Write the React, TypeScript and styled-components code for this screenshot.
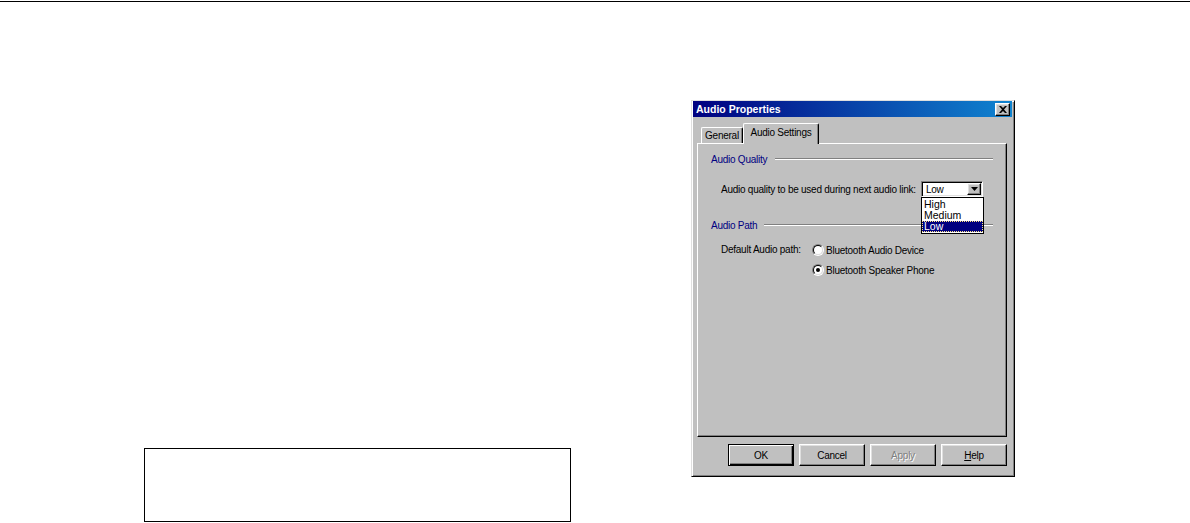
import styled, { createGlobalStyle } from 'styled-components'

const face = '#c0c0c0'
const shadow = '#808080'
const light = '#dfdfdf'
const navy = '#000080'
const uiFont = `'Liberation Sans', Arial, sans-serif`

const GlobalStyle = createGlobalStyle`
  html, body {
    margin: 0;
    padding: 0;
    background: #fff;
  }
  body {
    font-family: ${uiFont};
  }
`

const Page = styled.div`
  width: 1190px;
  height: 523px;
  overflow: hidden;
`

const TopRule = styled.div`
  height: 1px;
  margin-top: 1px;
  background: #000;
`

const Stage = styled.div`
  display: flex;
  align-items: flex-start;
`

const LeftColumn = styled.div`
  padding-left: 144px;
  padding-top: 446px;
`

const NoteBox = styled.div`
  width: 425px;
  height: 72px;
  border: 1px solid #000;
`

const DialogColumn = styled.div`
  margin-left: 120px;
  margin-top: 98px;
`

const Dialog = styled.div`
  box-sizing: border-box;
  width: 324px;
  height: 377px;
  padding: 0 2px 2px 2px;
  background: ${face};
  border: 1px solid;
  border-color: ${light} #000 #000 ${light};
  box-shadow: inset 1px 1px #fff, inset -1px -1px ${shadow};
  display: flex;
  flex-direction: column;
  font-size: 10px;
  letter-spacing: -0.25px;
  color: #000;
`

const TitleBar = styled.div`
  height: 16px;
  margin-left: -1px;
  padding: 0 2px 0 3px;
  display: flex;
  align-items: center;
  justify-content: space-between;
  background: linear-gradient(to right, #000080, #1084d0);
  color: #fff;
  font-weight: bold;
  font-size: 10.5px;
  letter-spacing: 0;
`

const Raised = styled.div`
  box-sizing: border-box;
  background: ${face};
  border: 1px solid;
  border-color: #fff #000 #000 #fff;
  box-shadow: inset -1px -1px ${shadow}, inset 1px 1px ${light};
  display: flex;
  align-items: center;
  justify-content: center;
`

const CloseButton = styled(Raised)`
  width: 15px;
  height: 13px;
`

const Body = styled.div`
  flex: 1;
  display: flex;
  flex-direction: column;
  padding: 6px 5px 0 3px;
`

const TabRow = styled.div`
  height: 20px;
  padding-left: 4px;
  display: flex;
  align-items: flex-end;
  position: relative;
  z-index: 1;
`

const Tab = styled.div<{ active?: boolean }>`
  box-sizing: border-box;
  height: ${(p) => (p.active ? '21px' : '16px')};
  width: ${(p) => (p.active ? '76px' : '42px')};
  margin-bottom: ${(p) => (p.active ? '-1px' : '0')};
  padding-top: ${(p) => (p.active ? '3px' : '2px')};
  background: ${face};
  border-top: 1px solid #fff;
  border-left: 1px solid #fff;
  border-right: 1px solid #000;
  border-radius: 2px 2px 0 0;
  box-shadow: inset -1px 0 ${shadow};
  text-align: center;
`

const Panel = styled.div`
  box-sizing: border-box;
  height: 294px;
  border: 1px solid;
  border-color: #fff #000 #000 #fff;
  box-shadow: inset -1px -1px ${shadow};
  padding: 9px 13px 0 13px;
  display: flex;
  flex-direction: column;
`

const GroupHeader = styled.div<{ gap: number }>`
  display: flex;
  align-items: center;
  gap: ${(p) => p.gap}px;
  height: 12px;
`

const GroupLabel = styled.span`
  color: ${navy};
`

const GroupLine = styled.div`
  flex: 1;
  border-top: 1px solid ${shadow};
  border-bottom: 1px solid #fff;
`

const QualityRow = styled.div`
  margin-top: 16px;
  padding: 0 10px 0 10px;
  display: flex;
  align-items: center;
  justify-content: space-between;
`

const Combo = styled.div`
  position: relative;
  box-sizing: border-box;
  width: 62px;
  height: 16px;
  background: #fff;
  border: 1px solid;
  border-color: ${shadow} #fff #fff ${shadow};
  box-shadow: inset 1px 1px #000, inset -1px -1px ${light};
  display: flex;
  align-items: center;
  justify-content: space-between;
  padding: 2px 2px 2px 4px;
`

const ComboArrow = styled(Raised)`
  width: 14px;
  height: 12px;
  margin-right: -1px;
`

const DropList = styled.div`
  position: absolute;
  top: 15px;
  left: -1px;
  width: 63px;
  box-sizing: border-box;
  background: #fff;
  border: 1px solid #000;
  padding: 1px 0;
  z-index: 2;
`

const DropItem = styled.div<{ selected?: boolean }>`
  height: 11px;
  line-height: 11px;
  padding-left: 2px;
  font-size: 10.5px;
  letter-spacing: 0;
  background: ${(p) => (p.selected ? navy : 'transparent')};
  color: ${(p) => (p.selected ? '#fff' : '#000')};
  outline: ${(p) => (p.selected ? '1px dotted #ffe680' : 'none')};
  outline-offset: -1px;
`

const PathHeader = styled(GroupHeader)`
  margin-top: 22px;
`

const PathGrid = styled.div`
  margin-top: 13px;
  padding-left: 10px;
  display: grid;
  grid-template-columns: 91px auto;
  align-items: start;
`

const PathLabel = styled.span`
  height: 12px;
  line-height: 12px;
`

const RadioOption = styled.label`
  display: flex;
  align-items: center;
  gap: 2px;
  height: 12px;
`

const RadioDot = styled.span<{ checked?: boolean }>`
  box-sizing: border-box;
  width: 12px;
  height: 12px;
  border-radius: 50%;
  border: 1px solid;
  border-color: ${shadow} #fff #fff ${shadow};
  position: relative;
  &::before {
    content: '';
    position: absolute;
    inset: 0;
    border-radius: 50%;
    border: 1px solid;
    border-color: #000 ${light} ${light} #000;
    background: #fff;
  }
  &::after {
    content: '';
    display: ${(p) => (p.checked ? 'block' : 'none')};
    position: absolute;
    left: 3px;
    top: 3px;
    width: 4px;
    height: 4px;
    border-radius: 50%;
    background: #000;
  }
`

const RadioStack = styled.div`
  display: flex;
  flex-direction: column;
  gap: 8px;
`

const ButtonRow = styled.div`
  margin-top: 7px;
  display: flex;
  justify-content: flex-end;
  gap: 5px;
`

const PushButton = styled(Raised)<{ isDefault?: boolean; disabled?: boolean }>`
  width: 66px;
  height: 22px;
  ${(p) =>
    p.isDefault
      ? `border: 1px solid #000;
         box-shadow: inset 1px 1px #fff, inset -1px -1px #000, inset -2px -2px ${shadow};`
      : ''}
  color: ${(p) => (p.disabled ? shadow : '#000')};
  text-shadow: ${(p) => (p.disabled ? '1px 1px #fff' : 'none')};
`

const Accel = styled.span`
  text-decoration: underline;
`

function CloseGlyph() {
  return (
    <svg width="8" height="7" viewBox="0 0 8 7">
      <path d="M0 0h2l2 2 2-2h2L5 3.5 8 7H6L4 5 2 7H0l3-3.5z" fill="#000" />
    </svg>
  )
}

function DownArrow() {
  return (
    <svg width="7" height="4" viewBox="0 0 7 4">
      <path d="M0 0h7L3.5 4z" fill="#000" />
    </svg>
  )
}

export default function App() {
  return (
    <Page>
      <GlobalStyle />
      <TopRule />
      <Stage>
        <LeftColumn>
          <NoteBox />
        </LeftColumn>
        <DialogColumn>
          <Dialog>
            <TitleBar>
              <span>Audio Properties</span>
              <CloseButton>
                <CloseGlyph />
              </CloseButton>
            </TitleBar>
            <Body>
              <TabRow>
                <Tab>General</Tab>
                <Tab active>Audio Settings</Tab>
              </TabRow>
              <Panel>
                <GroupHeader gap={8}>
                  <GroupLabel>Audio Quality</GroupLabel>
                  <GroupLine />
                </GroupHeader>
                <QualityRow>
                  <span>Audio quality to be used during next audio link:</span>
                  <Combo>
                    <span>Low</span>
                    <ComboArrow>
                      <DownArrow />
                    </ComboArrow>
                    <DropList>
                      <DropItem>High</DropItem>
                      <DropItem>Medium</DropItem>
                      <DropItem selected>Low</DropItem>
                    </DropList>
                  </Combo>
                </QualityRow>
                <PathHeader gap={7}>
                  <GroupLabel>Audio Path</GroupLabel>
                  <GroupLine />
                </PathHeader>
                <PathGrid>
                  <PathLabel>Default Audio path:</PathLabel>
                  <RadioStack>
                    <RadioOption>
                      <RadioDot />
                      <span>Bluetooth Audio Device</span>
                    </RadioOption>
                    <RadioOption>
                      <RadioDot checked />
                      <span>Bluetooth Speaker Phone</span>
                    </RadioOption>
                  </RadioStack>
                </PathGrid>
              </Panel>
              <ButtonRow>
                <PushButton isDefault>OK</PushButton>
                <PushButton>Cancel</PushButton>
                <PushButton disabled>Apply</PushButton>
                <PushButton>
                  <span>
                    <Accel>H</Accel>elp
                  </span>
                </PushButton>
              </ButtonRow>
            </Body>
          </Dialog>
        </DialogColumn>
      </Stage>
    </Page>
  )
}
